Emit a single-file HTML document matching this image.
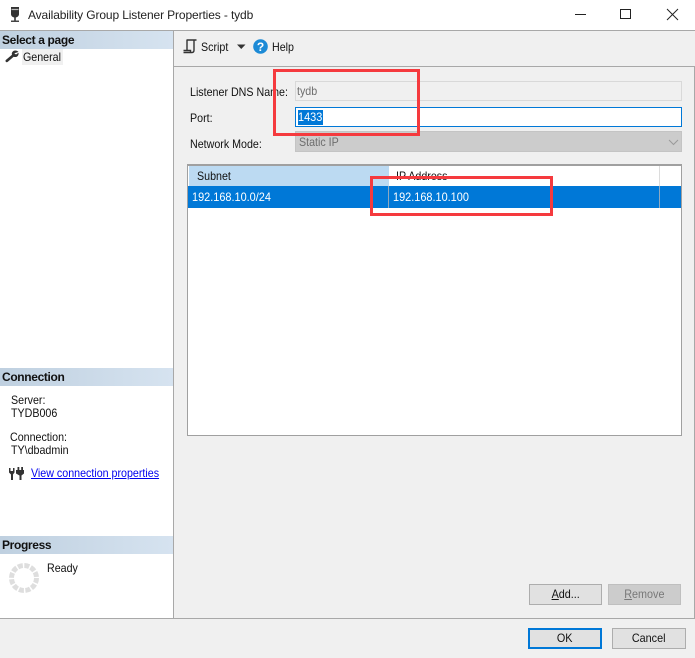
<!DOCTYPE html>
<html><head><meta charset="utf-8"><style>
html,body{margin:0;padding:0;background:#fff}
#p{position:relative;width:695px;height:658px;overflow:hidden;background:#f0f0f0;font-family:"Liberation Sans",sans-serif;font-size:12px;color:#111;}
#p div,#p span.t,#p a{position:absolute;white-space:nowrap}
.t,#p a{line-height:14px;transform:scaleX(.89);transform-origin:0 0}
.n{transform:scaleX(.91)!important}
.hdr{left:0;width:173px;height:18px;background:linear-gradient(90deg,#bfd0e0,#d6e3f0);font-weight:bold;line-height:19px;text-indent:2px;letter-spacing:-.35px}
.btn{box-sizing:border-box;background:#e1e1e1;border:1px solid #adadad;text-align:center;line-height:19px}
.btn span{display:inline-block;transform:scaleX(.9)}
.red{box-sizing:border-box;border:3px solid #f53a3e}
u{text-decoration:underline}
</style></head><body><div id="p">
<div style="left:0;top:0;width:695px;height:30px;background:#fff"></div>
<div style="left:0;top:30px;width:695px;height:1px;background:#a8a8a8"></div>
<svg style="position:absolute;left:8px;top:6px" width="15" height="18" viewBox="0 0 15 18"><path d="M3 1h8v7c0 2-1.500 3.500-4 3.500S3 10 3 8z" fill="#333"/><path d="M3.500 3.500h7" stroke="#bbb" stroke-width="1.200"/><path d="M6.200 11h1.600v3.500h-1.600z" fill="#333"/><path d="M3 14.500h8v1.500H3z" fill="#444"/></svg>
<span class="t" style="left:28px;top:8px;font-size:12px;color:#222;transform:none;letter-spacing:-.12px">Availability Group Listener Properties - tydb</span>
<div style="left:620px;top:9px;width:11px;height:10px;box-sizing:border-box;border:1.500px solid #222"></div>
<svg style="position:absolute;left:574px;top:8px" width="110" height="13" viewBox="0 0 110 13"><path d="M1 6.500h11" stroke="#222" stroke-width="1"/><path d="M93 1l11 11M104 1l-11 11" stroke="#222" stroke-width="1"/></svg>

<!-- left pane -->
<div style="left:0;top:31px;width:173px;height:587px;background:#fff"></div>
<div style="left:173px;top:31px;width:1px;height:587px;background:#a8a8a8"></div>
<div class="hdr" style="top:31px">Select a page</div>
<div style="left:22px;top:49px;width:41px;height:16px;background:#f0f0f0"></div>
<svg style="position:absolute;left:5px;top:50px" width="14" height="13" viewBox="0 0 14 13"><path d="M13.500 2C12 0 8.500 0 7.200 2.200c-.5.900-.5 1.800-.2 2.600L.8 10c-1 1.200.6 3 1.900 1.900L8.700 6.800c2 .7 3.800-.1 4.500-1.600.4-.9.500-1.700.3-2.500L11 4.500 9.300 3.300z" fill="#333"/></svg>
<span class="t" style="left:23px;top:50px">General</span>
<div class="hdr" style="top:368px">Connection</div>
<span class="t" style="left:11px;top:393px">Server:</span>
<span class="t" style="left:11px;top:406px">TYDB006</span>
<span class="t" style="left:10px;top:430px">Connection:</span>
<span class="t" style="left:11px;top:443px">TY\dbadmin</span>
<svg style="position:absolute;left:9px;top:467px" width="15" height="14" viewBox="0 0 15 14"><path d="M0 1h1.500v3h2.500V1h1.500v4.500L4 7.500V13H2V7.500L0 5.500z" fill="#333"/><path d="M8.500 0h1.800v3h1.900V0H14v3h1v3.500l-2.500 2V13h-2V8.500L7 6.500V3h1.500z" fill="#333"/></svg>
<a style="left:31px;top:466px;color:#0000ee;text-decoration:underline">View connection properties</a>
<div class="hdr" style="top:536px">Progress</div>
<svg style="position:absolute;left:9px;top:563px" width="30" height="30" viewBox="0 0 30 30"><circle cx="15" cy="15" r="12.500" fill="none" stroke="#dedede" stroke-width="5" stroke-dasharray="5 1.540"/></svg>
<span class="t" style="left:47px;top:561px">Ready</span>

<!-- toolbar -->
<svg style="position:absolute;left:183px;top:39px" width="14" height="15" viewBox="0 0 14 15"><path d="M3.500 1h10M4 1v10.500M11 1v10c0 1.500-.7 2.500-2 2.500H.5M.5 11.500H7.500V13" fill="none" stroke="#333" stroke-width="1.400"/></svg>
<span class="t" style="left:201px;top:40px">Script</span>
<svg style="position:absolute;left:237px;top:44px" width="9" height="6"><path d="M0 .5h8.500L4.250 5z" fill="#333"/></svg>
<svg style="position:absolute;left:253px;top:39px" width="15" height="15" viewBox="0 0 15 15"><circle cx="7.500" cy="7.500" r="7.300" fill="#1c8ad6"/><text x="7.500" y="12" text-anchor="middle" font-family="Liberation Sans" font-weight="bold" font-size="12" fill="#fff">?</text></svg>
<span class="t" style="left:272px;top:40px">Help</span>

<!-- panel -->
<div style="left:174px;top:66px;width:521px;height:1px;background:#a8a8a8"></div>
<div style="left:694px;top:66px;width:1px;height:553px;background:#a8a8a8"></div>
<div style="left:0;top:618px;width:695px;height:1px;background:#a8a8a8"></div>

<span class="t" style="left:190px;top:85px">Listener DNS Name:</span>
<span class="t" style="left:190px;top:111px">Port:</span>
<span class="t" style="left:190px;top:137px">Network Mode:</span>
<div style="left:295px;top:81px;width:387px;height:20px;box-sizing:border-box;border:1px solid #d9d9d9;background:#f0f0f0"></div>
<span class="t" style="left:297px;top:84px;color:#6d6d6d">tydb</span>
<div style="left:295px;top:107px;width:387px;height:20px;box-sizing:border-box;border:1px solid #0078d7;background:#fff"></div>
<div style="left:298px;top:110px;width:25px;height:15px;background:#0078d7"></div>
<span class="t n" style="left:298px;top:110px;color:#fff">1433</span>
<div style="left:295px;top:131px;width:387px;height:21px;box-sizing:border-box;border:1px solid #c4c4c4;background:#cccccc"></div>
<span class="t" style="left:299px;top:135px;color:#6d6d6d">Static IP</span>
<svg style="position:absolute;left:668px;top:139px" width="11" height="7"><path d="M1 1l4.500 4.500L10 1" fill="none" stroke="#9a9a9a" stroke-width="1"/></svg>

<!-- grid -->
<div style="left:187px;top:164px;width:495px;height:272px;box-sizing:border-box;border:1px solid #a0a0a0;border-top-width:2px;background:#fff"></div>
<div style="left:189px;top:166px;width:200px;height:20px;background:#bcdaf2"></div>
<div style="left:659px;top:166px;width:1px;height:20px;background:#dcdcdc"></div>
<span class="t" style="left:197px;top:169px">Subnet</span>
<span class="t" style="left:396px;top:169px">IP Address</span>
<div style="left:188px;top:186px;width:493px;height:22px;background:#0078d7"></div>
<div style="left:388px;top:186px;width:1px;height:22px;background:#8fa9c0"></div>
<div style="left:659px;top:186px;width:1px;height:22px;background:#8fa9c0"></div>
<span class="t n" style="left:192px;top:190px;color:#fff">192.168.10.0/24</span>
<span class="t n" style="left:393px;top:190px;color:#fff">192.168.10.100</span>

<!-- red boxes -->
<div class="red" style="left:273px;top:69px;width:147px;height:67px"></div>
<div class="red" style="left:370px;top:176px;width:183px;height:40px"></div>

<!-- buttons -->
<div class="btn" style="left:529px;top:584px;width:73px;height:21px"><span><u>A</u>dd...</span></div>
<div class="btn" style="left:608px;top:584px;width:73px;height:21px;background:#cccccc;border-color:#bfbfbf;color:#787878"><span><u>R</u>emove</span></div>
<div class="btn" style="left:528px;top:628px;width:74px;height:21px;border:2px solid #0078d7;line-height:17px"><span>OK</span></div>
<div class="btn" style="left:612px;top:628px;width:74px;height:21px"><span>Cancel</span></div>
</div></body></html>
